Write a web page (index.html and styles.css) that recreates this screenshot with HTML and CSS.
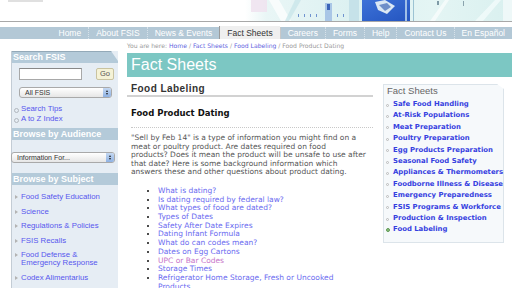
FILE: index.html
```html
<!DOCTYPE html>
<html lang="en">
<head>
<meta charset="utf-8">
<title>FSIS Fact Sheets - Food Product Dating</title>
<link rel="stylesheet" href="styles.css">
</head>
<body>
<div class="page">
  <header class="masthead">
    <div class="logo-strip"></div>
    <svg class="photo" viewBox="0 0 267 21" width="267" height="21" aria-hidden="true">
      <defs>
        <linearGradient id="bg" x1="0" y1="0" x2="1" y2="0">
          <stop offset="0" stop-color="#ffffff"/>
          <stop offset="0.08" stop-color="#e9f6f6"/>
          <stop offset="0.4" stop-color="#dcf1f1"/>
          <stop offset="0.7" stop-color="#e4f5f4"/>
          <stop offset="1" stop-color="#d9f0ef"/>
        </linearGradient>
        <linearGradient id="blue" x1="0" y1="0" x2="1" y2="1">
          <stop offset="0" stop-color="#3d72d8"/>
          <stop offset="1" stop-color="#2455c0"/>
        </linearGradient>
      </defs>
      <rect width="267" height="21" fill="url(#bg)"/>
      <rect x="6" y="0" width="16" height="12" fill="#efe3ef" opacity="0.9"/>
      <polygon points="24,0 34,0 46,21 36,21" fill="#ffffff" opacity="0.7"/>
      <polygon points="50,0 56,0 44,21 40,21" fill="#c9e6ea" opacity="0.8"/>
      <rect x="53" y="14" width="1" height="3" fill="#6f93cf"/>
      <rect x="59" y="14" width="1" height="3" fill="#6f93cf"/>
      <rect x="65" y="14" width="1" height="3" fill="#6f93cf"/>
      <rect x="71" y="14" width="1" height="3" fill="#6f93cf"/>
      <rect x="92" y="14" width="1" height="3" fill="#6f93cf"/>
      <rect x="98" y="14" width="1" height="3" fill="#6f93cf"/>
      <rect x="80" y="3" width="7" height="18" fill="#a9c6e6"/>
      <rect x="82" y="4" width="3" height="6" fill="#3b64b8"/>
      <rect x="104" y="0" width="10" height="21" fill="#bcdce6" opacity="0.7"/>
      <rect x="117" y="0" width="48" height="21" fill="url(#blue)"/>
      <polygon points="130,2 140,0 150,6 142,14 133,10" fill="#dbe8f4"/>
      <polygon points="134,5 142,3 146,7 140,11" fill="#6f8fc8"/>
      <rect x="160" y="0" width="2" height="21" fill="#9fbfe8"/>
      <rect x="168" y="0" width="1" height="21" fill="#9cc3d3"/>
      <polygon points="185,21 200,0 204,0 190,21" fill="#ffffff" opacity="0.6"/>
      <rect x="192" y="1" width="2" height="4" fill="#7f9aa6"/>
      <rect x="218" y="1" width="1" height="5" fill="#8aa3ad"/>
      <polygon points="230,21 250,0 256,0 238,21" fill="#f3fbfb" opacity="0.8"/>
      <rect x="258" y="0" width="9" height="21" fill="#eef8f8"/>
    </svg>
  </header>

  <nav class="topnav">
    <a href="#">Home</a>
    <a href="#">About FSIS</a>
    <a href="#">News &amp; Events</a>
    <a href="#" class="active">Fact Sheets</a>
    <a href="#">Careers</a>
    <a href="#">Forms</a>
    <a href="#">Help</a>
    <a href="#">Contact Us</a>
    <a href="#">En Español</a>
  </nav>

  <div class="layout">
    <aside class="sidebar">
      <div class="panel">
        <h2 class="side-head side-head-cut">Search FSIS</h2>
        <form class="search">
          <div class="search-row">
            <input class="search-input" type="text" aria-label="Search">
            <button class="go" type="button">Go</button>
          </div>
          <div class="select select-all">
            <span class="select-text">All FSIS</span>
            <span class="arrows"><span class="up"></span><span class="down"></span></span>
          </div>
        </form>
        <ul class="side-links">
          <li><a href="#">Search Tips</a></li>
          <li><a href="#">A to Z Index</a></li>
        </ul>
        <h2 class="side-head">Browse by Audience</h2>
        <div class="select select-aud">
          <span class="select-text">Information For...</span>
          <span class="arrows"><span class="up"></span><span class="down"></span></span>
        </div>
        <h2 class="side-head side-head-subject">Browse by Subject</h2>
        <ul class="subject-links">
          <li><a href="#">Food Safety Education</a></li>
          <li><a href="#">Science</a></li>
          <li><a href="#">Regulations &amp; Policies</a></li>
          <li><a href="#">FSIS Recalls</a></li>
          <li><a href="#">Food Defense &amp;<br>Emergency Response</a></li>
          <li><a href="#">Codex Alimentarius</a></li>
        </ul>
      </div>
    </aside>

    <main class="main">
      <div class="crumbs">You are here: <a href="#">Home</a> / <a href="#">Fact Sheets</a> / <a href="#">Food Labeling</a> / Food Product Dating</div>
      <h1 class="banner">Fact Sheets</h1>
      <div class="columns">
        <article class="article">
          <h2 class="section-title">Food Labeling</h2>
          <h3 class="doc-title">Food Product Dating</h3>
          <p class="intro">"Sell by Feb 14" is a type of information you might find on a meat or poultry product. Are dates required on food<br>products? Does it mean the product will be unsafe to use after that date? Here is some background information which answers these and other questions about product dating.</p>
          <ul class="toc">
            <li><a href="#">What is dating?</a></li>
            <li><a href="#">Is dating required by federal law?</a></li>
            <li><a href="#">What types of food are dated?</a></li>
            <li><a href="#">Types of Dates</a></li>
            <li><a href="#">Safety After Date Expires</a></li>
            <li><a href="#">Dating Infant Formula</a></li>
            <li><a href="#">What do can codes mean?</a></li>
            <li><a href="#">Dates on Egg Cartons</a></li>
            <li><a href="#" class="visited">UPC or Bar Codes</a></li>
            <li><a href="#">Storage Times</a></li>
            <li><a href="#">Refrigerator Home Storage, Fresh or Uncooked Products</a></li>
          </ul>
        </article>
        <aside class="factbox">
          <h2 class="factbox-title">Fact Sheets</h2>
          <ul class="factbox-list">
            <li><a href="#">Safe Food Handling</a></li>
            <li><a href="#">At-Risk Populations</a></li>
            <li><a href="#">Meat Preparation</a></li>
            <li><a href="#">Poultry Preparation</a></li>
            <li><a href="#">Egg Products Preparation</a></li>
            <li><a href="#">Seasonal Food Safety</a></li>
            <li><a href="#">Appliances &amp; Thermometers</a></li>
            <li><a href="#">Foodborne Illness &amp; Disease</a></li>
            <li><a href="#">Emergency Preparedness</a></li>
            <li><a href="#">FSIS Programs &amp; Workforce</a></li>
            <li><a href="#">Production &amp; Inspection</a></li>
            <li class="current"><a href="#">Food Labeling</a></li>
          </ul>
        </aside>
      </div>
    </main>
  </div>
</div>
</body>
</html>
```

FILE: styles.css
```css
* { box-sizing: border-box; }
html, body { margin: 0; padding: 0; }
body {
  background: #ffffff;
  font-family: "Liberation Sans", Arial, sans-serif;
  overflow: hidden;
}
a { text-decoration: none; }
ul { list-style: none; margin: 0; padding: 0; }
h1, h2, h3, p { margin: 0; font-weight: normal; }

.page { width: 512px; height: 288px; overflow: hidden; }

/* masthead */
.masthead {
  height: 22px;
  border-bottom: 1px solid #a8a8a8;
  display: flex;
  justify-content: space-between;
  align-items: flex-start;
}
.logo-strip { margin-left: 8px; width: 35px; height: 2px; background: #e0e0e0; }
.photo { display: block; width: 267px; height: 21px; }

/* nav */
.topnav {
  margin-top: 5px;
  height: 12px;
  background: #b3c8d6;
  display: flex;
  justify-content: flex-end;
}
.topnav a {
  font-size: 8.5px;
  line-height: 12px;
  color: #ffffff;
  padding: 0 7px;
  border-left: 1px dotted #d7e2ea;
  white-space: nowrap;
}
.topnav a:first-child { border-left: 0; }
.topnav a.active {
  background: #efefef;
  color: #333333;
  margin-top: -1px;
  height: 13px;
  line-height: 14px;
  border-left: 1px solid #9a9a9a;
}
.topnav a.active + a { border-left: 1px solid #c8c8c8; }

/* layout */
.layout {
  display: flex;
  align-items: flex-start;
  gap: 9px;
  padding-left: 11px;
}

/* sidebar */
.sidebar { width: 107px; flex: none; margin-top: 12px; }
.panel {
  background: #e6edf4;
  border-left: 1px solid #c3ccd5;
  height: 240px;
  padding-bottom: 10px;
}
.side-head {
  height: 12px;
  line-height: 12px;
  background: #b4cad9;
  color: #ffffff;
  font-size: 9px;
  font-weight: bold;
  padding-left: 1px;
  white-space: nowrap;
}
.side-head-cut {
  border-top: 1px solid #93a9b8;
  line-height: 11px;
  clip-path: polygon(0 0, 99px 0, 100% 10px, 100% 100%, 0 100%);
}
.search { padding-left: 7px; }
.search-row { display: flex; align-items: center; margin-top: 5px; gap: 14px; }
.search-input {
  width: 63px;
  height: 12px;
  border: 1px solid #a8a8a8;
  border-top-color: #888888;
  background: #ffffff;
  padding: 0;
  margin: 0;
}
.go {
  width: 18px;
  height: 12px;
  padding: 0;
  margin: 0;
  font-family: "Liberation Sans", Arial, sans-serif;
  font-size: 7.5px;
  color: #555555;
  background: #f5f2d6;
  border: 1px solid #c9c3a0;
  border-radius: 2px;
  line-height: 10px;
}
.select {
  position: relative;
  height: 11px;
  border: 1px solid #a9a9a9;
  border-radius: 3px;
  background: linear-gradient(#ffffff, #e6e6e6);
  display: flex;
  align-items: center;
}
.select-text {
  font-size: 7px;
  color: #333333;
  padding-left: 5px;
  line-height: 9px;
}
.select-all { width: 93px; margin-top: 7px; }
.select-aud { width: 104px; margin-top: 12px; margin-left: -1px; }
.arrows {
  position: absolute;
  right: 0;
  top: 0;
  bottom: 0;
  width: 8px;
  border-radius: 0 2px 2px 0;
  background: linear-gradient(#c4d8f2, #8fb2e3);
  display: flex;
  flex-direction: column;
  align-items: center;
  justify-content: center;
  gap: 1px;
}
.arrows .up {
  width: 0; height: 0;
  border-left: 1.5px solid transparent;
  border-right: 1.5px solid transparent;
  border-bottom: 2px solid #222;
}
.arrows .down {
  width: 0; height: 0;
  border-left: 1.5px solid transparent;
  border-right: 1.5px solid transparent;
  border-top: 2px solid #222;
}

.side-links { margin-top: 6px; margin-bottom: 4px; }
.side-links li {
  font-size: 7.8px;
  line-height: 10px;
  padding-left: 9px;
  position: relative;
}
.side-links li::before {
  content: "";
  position: absolute;
  left: 2px;
  top: 4px;
  width: 3px;
  height: 3px;
  border: 1px solid #b0b6bd;
  border-radius: 50%;
}
.side-links a, .subject-links a { color: #5757ee; }

.side-head-subject { margin-top: 10px; }
.subject-links {
  margin-top: 8px;
  display: flex;
  flex-direction: column;
  gap: 6.7px;
}
.subject-links li {
  font-size: 7.8px;
  line-height: 7.9px;
  padding-left: 9px;
  position: relative;
}
.subject-links li::before {
  content: "";
  position: absolute;
  left: 3px;
  top: 2px;
  width: 0;
  height: 0;
  border-top: 2px solid transparent;
  border-bottom: 2px solid transparent;
  border-left: 3px solid #b3b3b3;
}

/* main */
.main { flex: 1; min-width: 0; }
.crumbs {
  margin-top: 3px;
  font-family: "DejaVu Sans", Verdana, sans-serif;
  font-size: 6.1px;
  line-height: 8px;
  color: #9a9a9a;
  white-space: nowrap;
}
.crumbs a { color: #5f5fe0; }
.banner {
  margin-top: 3px;
  height: 24px;
  line-height: 24px;
  background: #7cc7c3;
  color: #ffffff;
  font-size: 16px;
  padding-left: 4px;
}
.columns { display: flex; align-items: flex-start; gap: 10px; }
.article { width: 246px; flex: none; }
.section-title {
  margin-top: 6px;
  height: 14px;
  line-height: 12px;
  padding-left: 4px;
  font-size: 10px;
  font-weight: bold;
  letter-spacing: 0.45px;
  color: #333333;
  border-bottom: 2px solid #d2d2d2;
}
.doc-title {
  margin-top: 11px;
  margin-left: 4px;
  font-family: "DejaVu Sans", Verdana, sans-serif;
  font-size: 8.5px;
  font-weight: bold;
  line-height: 11px;
  color: #111111;
  padding-bottom: 8px;
  border-bottom: 1px dotted #c8c8c8;
}
.intro {
  margin-top: 6px;
  padding: 0 4px;
  font-family: "DejaVu Sans", Verdana, sans-serif;
  font-size: 7.5px;
  line-height: 8.6px;
  color: #555555;
}
.toc {
  margin-top: 10px;
  padding-left: 31px;
  padding-right: 10px;
  list-style: disc;
  font-family: "DejaVu Sans", Verdana, sans-serif;
  font-size: 7.5px;
  line-height: 8.7px;
  color: #111111;
}
.toc a { color: #6a6af0; }
.toc a.visited { color: #c774c9; }

.factbox {
  width: 121px;
  flex: none;
  margin-top: 7px;
  background: #f6f9fb;
  border: 1px solid #dce4ea;
  padding-bottom: 6px;
  clip-path: polygon(0 0, 114px 0, 100% 5px, 100% 100%, 0 100%);
}
.factbox-title {
  font-size: 9.5px;
  line-height: 12px;
  color: #666666;
  padding-left: 3px;
}
.factbox-list { margin-top: 2px; }
.factbox-list li {
  position: relative;
  font-family: "DejaVu Sans", Verdana, sans-serif;
  font-size: 6.9px;
  font-weight: bold;
  line-height: 11.4px;
  padding-left: 9px;
  white-space: nowrap;
}
.factbox-list li::before {
  content: "";
  position: absolute;
  left: 2px;
  top: 4.5px;
  width: 3px;
  height: 3px;
  border: 1px solid #bbbbbb;
  border-radius: 50%;
  box-sizing: border-box;
}
.factbox-list li.current::before {
  background: #8fbf80;
  border-color: #5f9a55;
  width: 4px;
  height: 4px;
  top: 4px;
  left: 1.5px;
}
.factbox-list a { color: #3540e0; }
```
